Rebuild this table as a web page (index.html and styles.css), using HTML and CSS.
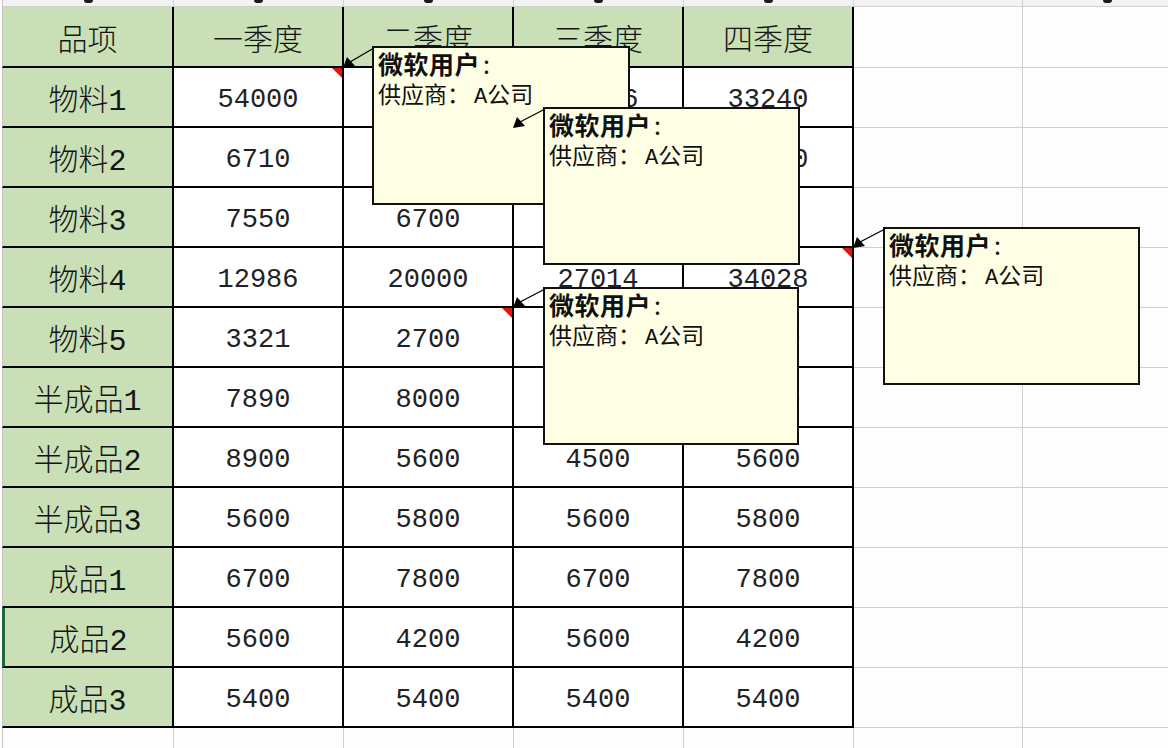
FILE: index.html
```html
<!DOCTYPE html>
<html lang="zh">
<head>
<meta charset="utf-8">
<title>Sheet</title>
<link rel="stylesheet" href="styles.css">
</head>
<body>
<div class="page">
  <div class="sheet">
    <!-- top strip -->
    <div class="c top first"><i class="blob"></i></div>
    <div class="c top"><i class="blob"></i></div>
    <div class="c top"><i class="blob"></i></div>
    <div class="c top"><i class="blob"></i></div>
    <div class="c top"><i class="blob"></i></div>
    <div class="c top"></div>
    <div class="c top"><i class="blob"></i></div>

    <!-- header -->
    <div class="c t g first lbl">品项</div>
    <div class="c t g lbl">一季度</div>
    <div class="c t g lbl">二季度</div>
    <div class="c t g lbl">三季度</div>
    <div class="c t g lbl">四季度</div>
    <div class="c"></div><div class="c"></div>

    <div class="c t g first lbl">物料1</div>
    <div class="c t num">54000<span class="flag"></span></div>
    <div class="c t num">47080</div>
    <div class="c t num">40166</div>
    <div class="c t num">33240</div>
    <div class="c"></div><div class="c"></div>

    <div class="c t g first lbl">物料2</div>
    <div class="c t num">6710</div>
    <div class="c t num">6810<span class="flag"></span></div>
    <div class="c t num">6950</div>
    <div class="c t num">10430</div>
    <div class="c"></div><div class="c"></div>

    <div class="c t g first lbl">物料3</div>
    <div class="c t num">7550</div>
    <div class="c t num">6700</div>
    <div class="c t num">7980</div>
    <div class="c t num">8200</div>
    <div class="c"></div><div class="c"></div>

    <div class="c t g first lbl">物料4</div>
    <div class="c t num">12986</div>
    <div class="c t num">20000</div>
    <div class="c t num">27014</div>
    <div class="c t num">34028<span class="flag"></span></div>
    <div class="c"></div><div class="c"></div>

    <div class="c t g first lbl">物料5</div>
    <div class="c t num">3321</div>
    <div class="c t num">2700<span class="flag"></span></div>
    <div class="c t num">2400</div>
    <div class="c t num">2300</div>
    <div class="c"></div><div class="c"></div>

    <div class="c t g first lbl">半成品1</div>
    <div class="c t num">7890</div>
    <div class="c t num">8000</div>
    <div class="c t num">7600</div>
    <div class="c t num">7700</div>
    <div class="c"></div><div class="c"></div>

    <div class="c t g first lbl">半成品2</div>
    <div class="c t num">8900</div>
    <div class="c t num">5600</div>
    <div class="c t num">4500</div>
    <div class="c t num">5600</div>
    <div class="c"></div><div class="c"></div>

    <div class="c t g first lbl">半成品3</div>
    <div class="c t num">5600</div>
    <div class="c t num">5800</div>
    <div class="c t num">5600</div>
    <div class="c t num">5800</div>
    <div class="c"></div><div class="c"></div>

    <div class="c t g first lbl">成品1</div>
    <div class="c t num">6700</div>
    <div class="c t num">7800</div>
    <div class="c t num">6700</div>
    <div class="c t num">7800</div>
    <div class="c"></div><div class="c"></div>

    <div class="c t g first sel lbl">成品2</div>
    <div class="c t num">5600</div>
    <div class="c t num">4200</div>
    <div class="c t num">5600</div>
    <div class="c t num">4200</div>
    <div class="c"></div><div class="c"></div>

    <div class="c t g first lbl">成品3</div>
    <div class="c t num">5400</div>
    <div class="c t num">5400</div>
    <div class="c t num">5400</div>
    <div class="c t num">5400</div>
    <div class="c"></div><div class="c"></div>

    <!-- empty row -->
    <div class="c first"></div>
    <div class="c"></div><div class="c"></div><div class="c"></div>
    <div class="c"></div><div class="c"></div><div class="c"></div>
  </div>

  <div class="note n1"><div class="who">微软用户<span class="colon">:</span></div><div class="sup">供应商：<span class="a">A</span>公司</div></div>
  <div class="note n2"><div class="who">微软用户<span class="colon">:</span></div><div class="sup">供应商：<span class="a">A</span>公司</div></div>
  <div class="note n3"><div class="who">微软用户<span class="colon">:</span></div><div class="sup">供应商：<span class="a">A</span>公司</div></div>
  <div class="note n4"><div class="who">微软用户<span class="colon">:</span></div><div class="sup">供应商：<span class="a">A</span>公司</div></div>

  <svg class="arrows" width="1168" height="748" viewBox="0 0 1168 748" xmlns="http://www.w3.org/2000/svg">
    <g stroke="#000" stroke-width="1.3">
      <line x1="374" y1="48" x2="350" y2="62"/>
      <line x1="545" y1="109" x2="520" y2="122"/>
      <line x1="885" y1="229" x2="860" y2="242"/>
      <line x1="545" y1="289" x2="520" y2="302"/>
    </g>
    <g fill="#000">
      <polygon points="343,68 347,57 355,66"/>
      <polygon points="513,128 517,117 525,126"/>
      <polygon points="853,248 857,237 865,246"/>
      <polygon points="513,308 517,297 525,306"/>
    </g>
  </svg>
</div>
</body>
</html>
```

FILE: styles.css
```css
html, body {
  margin: 0;
  padding: 0;
  background: #fdfdfd;
}

.page {
  position: relative;
  width: 1168px;
  height: 748px;
  overflow: hidden;
}

.sheet {
  display: grid;
  padding-left: 2px;
  grid-template-columns: 172px 170px 170px 170px 170px 169px 170px;
  grid-template-rows: 7px 61px repeat(11, 60px) 60px;
  width: 1200px;
}

.c {
  position: relative;
  box-sizing: border-box;
  border-right: 1px solid #cfcfcf;
  border-bottom: 1px solid #cfcfcf;
  display: flex;
  align-items: center;
  justify-content: center;
  color: #151515;
  overflow: hidden;
}

.c.first {
  border-left: 1px solid #c4c4c4;
}

.c.sel {
  border-left: 3px solid #1e6b3a;
}

.c.top {
  background: #f3f3f3;
  align-items: flex-start;
}

.blob {
  display: block;
  width: 9px;
  height: 3px;
  border-radius: 0 0 3px 3px;
  background: #1a1a1a;
}

.c.t {
  border-right: 2px solid #000;
  border-bottom: 2px solid #000;
  background: #fff;
}

.c.g {
  background: #c9e0b7;
}

.lbl {
  font-family: "Liberation Mono", "Noto Sans CJK SC", monospace;
  font-size: 30px;
  font-weight: 300;
  padding-top: 0;
}

.num {
  font-family: "Liberation Mono", monospace;
  font-size: 27px;
  padding-top: 5px;
  color: #222;
}

.flag {
  position: absolute;
  top: 0;
  right: 0;
  width: 0;
  height: 0;
  border-top: 10px solid #e3120b;
  border-left: 10px solid transparent;
}

.note {
  position: absolute;
  box-sizing: border-box;
  background: #fefee4;
  border: 2px solid #111;
  padding: 0 4px;
  font-family: "Noto Sans CJK SC", sans-serif;
  line-height: 30px;
  color: #111;
  white-space: nowrap;
}

.note .who {
  font-weight: 700;
  font-size: 25px;
  letter-spacing: 0.5px;
}

.note .sup {
  font-size: 23px;
}

.note .colon {
  font-weight: 400;
  padding-left: 3px;
}

.note .a {
  font-family: "Liberation Mono", monospace;
  font-size: 22px;
  padding-left: 4px;
}

.n1 { left: 372px; top: 46px; width: 258px; height: 159px; }
.n2 { left: 543px; top: 107px; width: 257px; height: 158px; }
.n3 { left: 883px; top: 227px; width: 257px; height: 158px; }
.n4 { left: 543px; top: 287px; width: 256px; height: 158px; }

.arrows {
  position: absolute;
  left: 0;
  top: 0;
  pointer-events: none;
}
```
